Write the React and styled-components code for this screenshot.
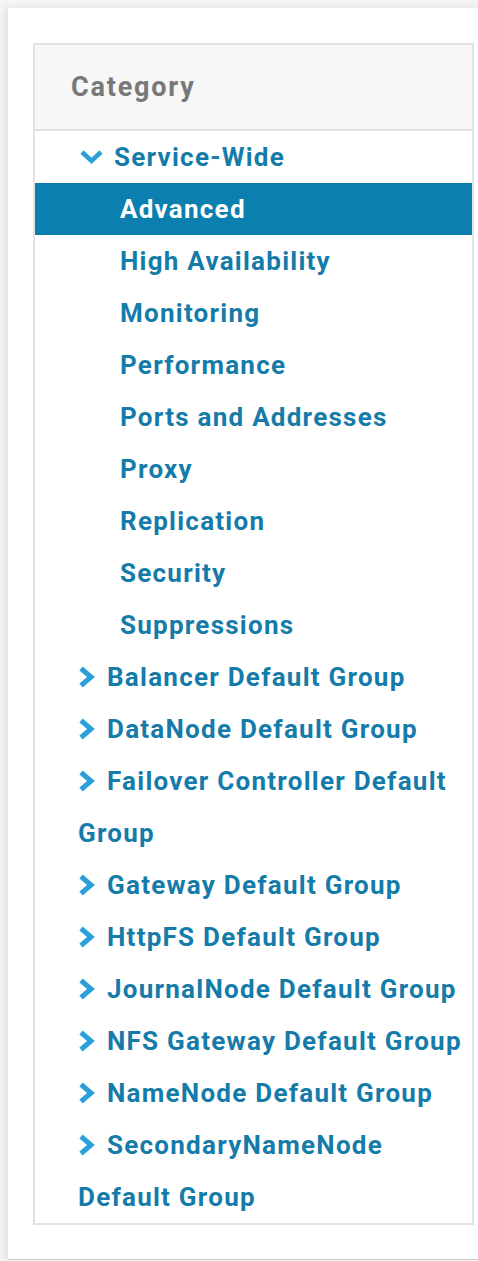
import styled, { createGlobalStyle } from "styled-components";

const Global = createGlobalStyle`
  body {
    margin: 0;
    background: #f4f4f4;
    font-family: Roboto, "Liberation Sans", sans-serif;
  }
`;

const Card = styled.div`
  margin: 8px 0 0 8px;
  width: 560px;
  height: 1252px;
  box-sizing: border-box;
  padding: 35px 25px;
  background: #fff;
  box-shadow: -3px 0 6px rgba(0, 0, 0, 0.08);
  border-bottom: 1px solid #c9c9c9;
`;

const Panel = styled.div`
  width: 437px;
  border: 2px solid #e2e2e2;
  background: #fff;
`;

const Header = styled.div`
  height: 84px;
  display: flex;
  align-items: center;
  padding-left: 36px;
  background: #f7f7f7;
  border-bottom: 2px solid #e2e2e2;
  color: #787878;
  font-size: 27px;
  letter-spacing: 1.8px;
  font-weight: 700;
`;

const List = styled.ul`
  list-style: none;
  margin: 0;
  padding: 0;
`;

const Row = styled.li`
  padding-left: ${(p) => p.$indent}px;
  padding-right: 2px;
  line-height: 52px;
  font-size: 26px;
  letter-spacing: 1.25px;
  font-weight: 700;
  color: ${(p) => (p.$active ? "#fff" : "#157ba9")};
  background: ${(p) => (p.$active ? "#0b7fae" : "transparent")};
`;

const Caret = styled.svg`
  display: inline-block;
  vertical-align: middle;
  margin-right: ${(p) => p.$gap}px;
  position: relative;
  top: -2px;
`;

const Down = () => (
  <Caret width="25" height="18" viewBox="0 0 25 18" $gap={10}>
    <polyline points="3,4 12.5,13 22,4" fill="none" stroke="#2a9fd8" strokeWidth="4.5" />
  </Caret>
);

const Right = () => (
  <Caret width="18" height="22" viewBox="0 0 18 22" $gap={11}>
    <polyline points="3,2.5 13,11 3,19.5" fill="none" stroke="#2a9fd8" strokeWidth="5" />
  </Caret>
);

const subItems = [
  "Advanced",
  "High Availability",
  "Monitoring",
  "Performance",
  "Ports and Addresses",
  "Proxy",
  "Replication",
  "Security",
  "Suppressions",
];

const groups = [
  "Balancer Default Group",
  "DataNode Default Group",
  "Failover Controller Default Group",
  "Gateway Default Group",
  "HttpFS Default Group",
  "JournalNode Default Group",
  "NFS Gateway Default Group",
  "NameNode Default Group",
  "SecondaryNameNode Default Group",
];

export default function App() {
  return (
    <>
      <Global />
      <Card>
        <Panel>
          <Header>Category</Header>
          <List>
            <Row $indent={44}>
              <Down />
              Service-Wide
            </Row>
            {subItems.map((name) => (
              <Row key={name} $indent={85} $active={name === "Advanced"}>
                {name}
              </Row>
            ))}
            {groups.map((name) => (
              <Row key={name} $indent={43}>
                <Right />
                {name}
              </Row>
            ))}
          </List>
        </Panel>
      </Card>
    </>
  );
}
